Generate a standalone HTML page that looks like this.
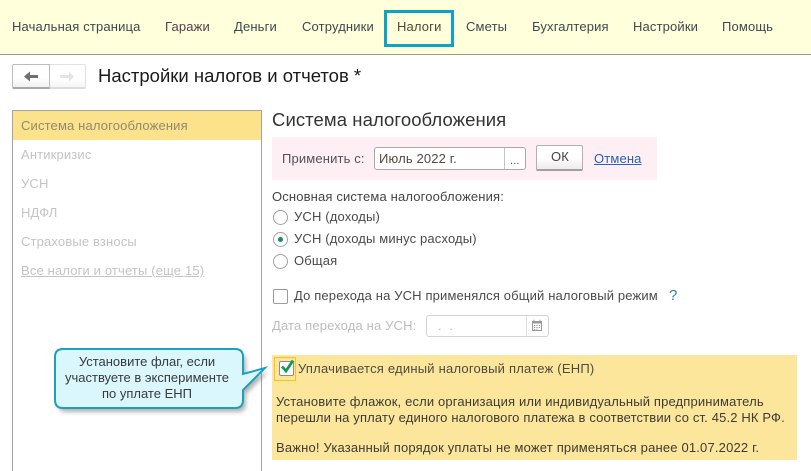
<!DOCTYPE html>
<html lang="ru">
<head>
<meta charset="utf-8">
<title>Настройки налогов и отчетов</title>
<style>
html,body{margin:0;padding:0;overflow:hidden;}
body{width:811px;height:471px;position:relative;overflow:hidden;background:#fff;font-family:"Liberation Sans",Arial,sans-serif;font-size:13px;letter-spacing:.15px;color:#4a4a4a;}
.a{position:absolute;white-space:nowrap;line-height:16px;}
.box{position:absolute;box-sizing:border-box;}
.g{color:#c4c4c4;}
.radio{position:absolute;box-sizing:border-box;width:15px;height:15px;border:1px solid #a0a0a0;border-radius:50%;background:#fff;}
</style>
</head>
<body>
<div class="box" style="left:0;top:0;width:811px;height:55px;background:#ffffdb;border-bottom:1px solid #9c9c84;"></div>
<div class="a" style="left:12px;top:19px;color:#3c4a50;">Начальная страница</div>
<div class="a" style="left:165px;top:19px;color:#5a3c50;">Гаражи</div>
<div class="a" style="left:234px;top:19px;color:#3c4a50;">Деньги</div>
<div class="a" style="left:302px;top:19px;color:#3c4a50;">Сотрудники</div>
<div class="box" style="left:384px;top:10px;width:70px;height:37px;border:3px solid #0ca4c4;"></div>
<div class="a" style="left:397px;top:19px;color:#50483c;">Налоги</div>
<div class="a" style="left:466px;top:19px;color:#3c4a50;">Сметы</div>
<div class="a" style="left:532px;top:19px;color:#3c4a50;">Бухгалтерия</div>
<div class="a" style="left:633px;top:19px;color:#3c4a50;">Настройки</div>
<div class="a" style="left:722px;top:19px;color:#3c4a50;">Помощь</div>

<div class="box" style="left:12px;top:64px;width:38px;height:25px;border:1px solid #bdbdbd;border-bottom:2px solid #a8a8a8;border-radius:2px 0 0 2px;background:linear-gradient(#fff 60%,#efefef);"></div>
<div class="box" style="left:50px;top:64px;width:36px;height:25px;border:1px solid #e2e2e2;border-left:0;border-bottom:2px solid #dcdcdc;border-radius:0 2px 2px 0;background:linear-gradient(#fff 60%,#f6f6f6);"></div>
<svg class="box" style="left:12px;top:64px;" width="76" height="26" viewBox="0 0 76 26">
<path d="M12 12.500L18 7.500V11H26V14H18V17.500Z" fill="#707070"/>
<path d="M48 11H57V7.500L62 12.500L57 17.500V14H48Z" fill="#e4e4e4"/>
</svg>
<div class="a" style="left:98px;top:65px;font-size:18.5px;line-height:22px;letter-spacing:0;color:#1a1a1a;">Настройки налогов и отчетов *</div>

<div class="box" style="left:12px;top:110px;width:250px;height:361px;border:1px solid #a3a3a3;border-bottom:0;"></div>
<div class="box" style="left:13px;top:111px;width:248px;height:29px;background:#fde28c;"></div>
<div class="a" style="left:21px;top:118px;color:#8f8a72;">Система налогообложения</div>
<div class="a g" style="left:21px;top:147px;">Антикризис</div>
<div class="a g" style="left:21px;top:176px;">УСН</div>
<div class="a g" style="left:21px;top:205px;">НДФЛ</div>
<div class="a g" style="left:21px;top:234px;">Страховые взносы</div>
<div class="a g" style="left:21px;top:263px;text-decoration:underline;">Все налоги и отчеты (еще 15)</div>

<div class="a" style="left:272px;top:109px;font-size:18.5px;line-height:22px;letter-spacing:.08px;color:#333;">Система налогообложения</div>

<div class="box" style="left:272px;top:137px;width:385px;height:43px;background:#fdeff3;"></div>
<div class="a" style="left:282px;top:151px;color:#55505a;">Применить с:</div>
<div class="box" style="left:374px;top:147px;width:152px;height:23px;border:1px solid #a8a8a8;border-radius:3px;background:#fff;"></div>
<div class="box" style="left:504px;top:148px;width:1px;height:21px;background:#c4c4c4;"></div>
<div class="a" style="left:379px;top:151px;color:#55483e;">Июль 2022 г.</div>
<div class="a" style="left:510px;top:153px;font-size:11px;color:#555;">...</div>
<div class="box" style="left:536px;top:145px;width:47px;height:26px;border:1px solid #b0b0b0;border-bottom:2px solid #a0a0a0;border-radius:2px;background:linear-gradient(#fff 50%,#ececec);"></div>
<div class="a" style="left:551px;top:149px;color:#444;">ОК</div>
<div class="a" style="left:594px;top:151px;color:#2a62b4;text-decoration:underline;">Отмена</div>

<div class="a" style="left:272px;top:189px;color:#444;">Основная система налогообложения:</div>
<div class="radio" style="left:273px;top:210px;"></div>
<div class="a" style="left:294px;top:209px;color:#4a4a4a;">УСН (доходы)</div>
<div class="radio" style="left:273px;top:232px;"></div>
<div class="box" style="left:278px;top:237px;width:5px;height:5px;border-radius:50%;background:#11925a;"></div>
<div class="a" style="left:294px;top:231px;color:#4a4a4a;">УСН (доходы минус расходы)</div>
<div class="radio" style="left:273px;top:254px;"></div>
<div class="a" style="left:294px;top:253px;color:#4a4a4a;">Общая</div>

<div class="box" style="left:273px;top:289px;width:15px;height:15px;border:1px solid #9c9c9c;border-radius:2px;background:#fff;"></div>
<div class="a" style="left:294px;top:288px;color:#4a4a4a;">До перехода на УСН применялся общий налоговый режим</div>
<div class="a" style="left:669px;top:288px;font-size:15px;color:#2a7dbd;">?</div>

<div class="a g" style="left:272px;top:318px;color:#bcbcbc;">Дата перехода на УСН:</div>
<div class="box" style="left:426px;top:315px;width:123px;height:22px;border:1px solid #d4d4d4;border-radius:3px;background:#fff;"></div>
<div class="box" style="left:526px;top:316px;width:1px;height:20px;background:#dcdcdc;"></div>
<div class="a" style="left:438px;top:318px;color:#b8b8b8;">. &nbsp;.</div>
<svg class="box" style="left:530px;top:319px;" width="14" height="14" viewBox="0 0 14 14">
<path d="M2.500 2.500H11.500V11.500H2.500Z" fill="#fff" stroke="#999"/>
<path d="M2.500 2H11.500V4.500H2.500Z" fill="#999"/>
<path d="M4 0.800V2.500M10 0.800V2.500" stroke="#999"/>
<path d="M4 6.500H5.200M6.400 6.500H7.600M8.800 6.500H10M4 8.500H5.200M6.400 8.500H7.600M8.800 8.500H10M4 10.300H5.200M6.400 10.300H7.600" stroke="#999"/>
</svg>

<div class="box" style="left:272px;top:355px;width:525px;height:105px;background:#fbe69c;"></div>
<div class="box" style="left:274px;top:357px;width:22px;height:24px;border:1px solid #fbc21c;"></div>
<div class="box" style="left:279px;top:361px;width:15px;height:15px;border:1px solid #8c8c8c;border-radius:2px;background:#fff;"></div>
<svg class="box" style="left:278px;top:357px;" width="18" height="18" viewBox="0 0 18 18">
<path d="M4 9.500L8 14L15 3.500" fill="none" stroke="#109a55" stroke-width="2.800"/>
</svg>
<div class="a" style="left:298px;top:361px;letter-spacing:.22px;color:#4e4c40;">Уплачивается единый налоговый платеж (ЕНП)</div>
<div class="a" style="left:276px;top:394px;color:#3e3c34;">Установите флажок, если организация или индивидуальный предприниматель</div>
<div class="a" style="left:276px;top:410px;color:#3e3c34;">перешли на уплату единого налогового платежа в соответствии со ст. 45.2 НК РФ.</div>
<div class="a" style="left:276px;top:440px;letter-spacing:.18px;color:#3e3c34;">Важно! Указанный порядок уплаты не может применяться ранее 01.07.2022 г.</div>

<svg class="box" style="left:50px;top:345px;" width="225" height="75" viewBox="0 0 225 75">
<path d="M13 4H185Q193 4 193 12V29L215 23L193 45V55Q193 63 185 63H13Q5 63 5 55V12Q5 4 13 4Z" fill="#808080" opacity=".6" transform="translate(3,4)" style="filter:blur(2px)"/>
<path d="M13 4H185Q193 4 193 12V29L215 23L193 45V55Q193 63 185 63H13Q5 63 5 55V12Q5 4 13 4Z" fill="#d9f7fd" stroke="#1d9fbe" stroke-width="2"/>
</svg>
<div class="a" style="left:46px;top:354px;width:202px;text-align:center;letter-spacing:0;color:#3a3a3a;white-space:normal;">
<div>Установите флаг, если</div><div>участвуете в эксперименте</div><div>по уплате ЕНП</div>
</div>
</body>
</html>
